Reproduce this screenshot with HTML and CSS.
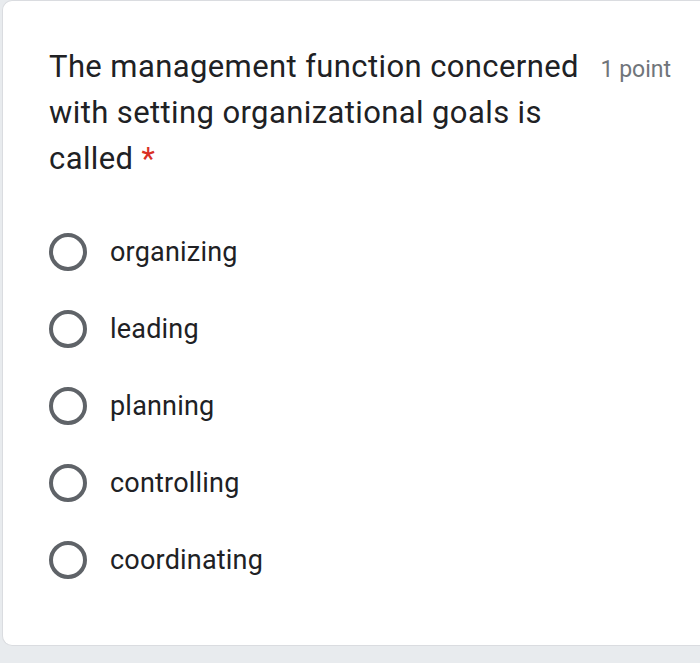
FILE: index.html
```html
<!DOCTYPE html>
<html>
<head>
<meta charset="utf-8">
<link rel="stylesheet" href="styles.css">
</head>
<body>
<div class="card">
  <div class="header">
    <div class="title">The management function concerned with setting organizational goals is called <span class="req">*</span></div>
    <div class="points">1 point</div>
  </div>
  <div class="options">
    <div class="option"><span class="radio"></span><span class="label">organizing</span></div>
    <div class="option"><span class="radio"></span><span class="label">leading</span></div>
    <div class="option"><span class="radio"></span><span class="label">planning</span></div>
    <div class="option"><span class="radio"></span><span class="label">controlling</span></div>
    <div class="option"><span class="radio"></span><span class="label">coordinating</span></div>
  </div>
</div>
</body>
</html>
```

FILE: styles.css
```css
html, body {
  margin: 0;
  padding: 0;
  overflow: hidden;
}
body {
  background: #e8ebee;
  font-family: Roboto, "Liberation Sans", sans-serif;
  color: #202124;
  height: 663px;
}
.card {
  margin-left: 2px;
  width: 698px;
  height: 646px;
  box-sizing: border-box;
  background: #fff;
  border: 1px solid #dadce0;
  border-right: none;
  border-radius: 10px 0 0 10px;
  padding: 43px 0 0 46px;
}
.header {
  display: flex;
  align-items: baseline;
  width: 622px;
  gap: 18px;
}
.title {
  flex: 1;
  font-size: 31px;
  line-height: 46px;
  letter-spacing: 0.4px;
}
.req {
  color: #d93025;
}
.points {
  font-size: 23px;
  color: #70757a;
  white-space: nowrap;
}
.options {
  margin-top: 31px;
  display: flex;
  flex-direction: column;
}
.option {
  height: 77px;
  display: flex;
  align-items: center;
  gap: 23px;
}
.radio {
  width: 38px;
  height: 38px;
  box-sizing: border-box;
  border: 4px solid #5f6368;
  border-radius: 50%;
  flex: none;
}
.label {
  font-size: 27px;
  letter-spacing: 0.2px;
}
```
